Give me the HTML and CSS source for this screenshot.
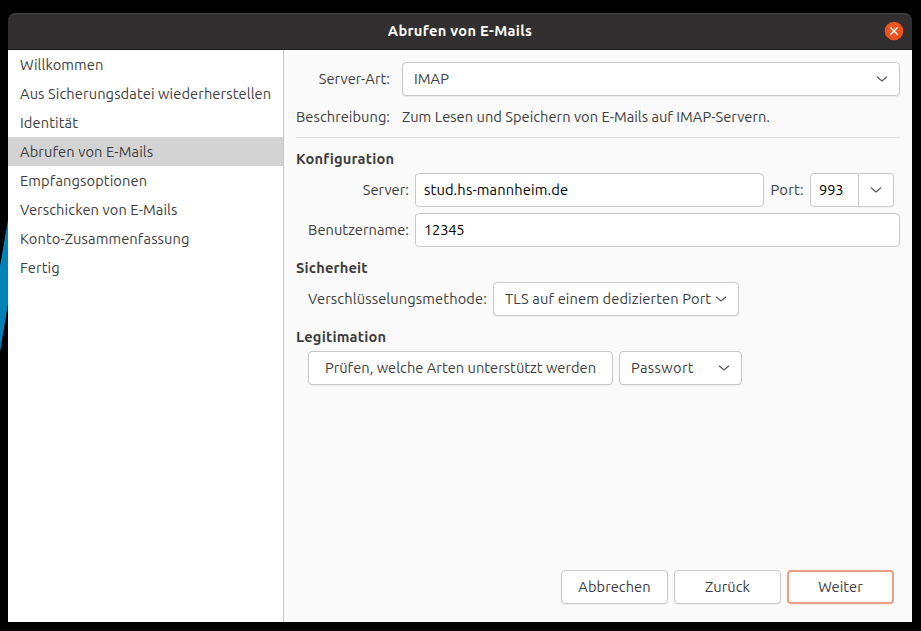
FILE: index.html
```html
<!DOCTYPE html>
<html lang="de">
<head>
<meta charset="utf-8">
<title>Abrufen von E-Mails</title>
<link rel="stylesheet" href="styles.css">
</head>
<body>
<svg class="wallpaper" width="8" height="631" viewBox="0 0 8 631"><path d="M8 220 0 266V352L8 304Z" fill="#0082b8"/></svg>
<div class="window">
  <header class="titlebar">
    <h1>Abrufen von E-Mails</h1>
    <button class="close" aria-label="Schließen"><svg width="20" height="20" viewBox="0 0 20 20"><circle cx="10" cy="10" r="9.3" fill="#e95420"/><path d="M6.5 6.5l7 7M13.5 6.5l-7 7" stroke="#fff" stroke-width="1.5"/></svg></button>
  </header>
  <div class="body">
    <nav class="steps">
      <a>Willkommen</a>
      <a>Aus Sicherungsdatei wiederherstellen</a>
      <a>Identität</a>
      <a class="active">Abrufen von E-Mails</a>
      <a>Empfangsoptionen</a>
      <a>Verschicken von E-Mails</a>
      <a>Konto-Zusammenfassung</a>
      <a>Fertig</a>
    </nav>
    <main class="page">
      <div class="type">
        <label>Server-Art:</label>
        <div class="box combo"><span>IMAP</span><svg class="chev" viewBox="0 0 12 6"><path d="M1 .7l5 4.2 5-4.2"/></svg></div>
        <label>Beschreibung:</label>
        <p>Zum Lesen und Speichern von E-Mails auf IMAP-Servern.</p>
      </div>
      <h2>Konfiguration</h2>
      <div class="config">
        <label>Server:</label>
        <div class="server">
          <div class="box entry host">stud.hs-mannheim.de</div>
          <label>Port:</label>
          <div class="port"><div class="box entry number">993</div><div class="box drop"><svg class="chev" viewBox="0 0 12 6"><path d="M1 .7l5 4.2 5-4.2"/></svg></div></div>
        </div>
        <label>Benutzername:</label>
        <div class="box entry user">12345</div>
      </div>
      <h2>Sicherheit</h2>
      <div class="line">
        <label class="method">Verschlüsselungsmethode:</label>
        <div class="box combo tls"><span>TLS auf einem dedizierten Port</span><svg class="chev" viewBox="0 0 12 6"><path d="M1 .7l5 4.2 5-4.2"/></svg></div>
      </div>
      <h2>Legitimation</h2>
      <div class="line">
        <button class="box check">Prüfen, welche Arten unterstützt werden</button>
        <div class="box combo auth"><span>Passwort</span><svg class="chev" viewBox="0 0 12 6"><path d="M1 .7l5 4.2 5-4.2"/></svg></div>
      </div>
      <footer class="actions">
        <button class="box">Abbrechen</button>
        <button class="box">Zurück</button>
        <button class="box primary">Weiter</button>
      </footer>
    </main>
  </div>
</div>
</body>
</html>
```
FILE: styles.css
```css
* { box-sizing: border-box; }
body {
  margin: 0;
  height: 631px;
  padding: 13px 9px 9px 8px;
  background: #000;
  overflow: hidden;
  color: #3d3d3d;
  font: 14.667px/20px "Ubuntu", "Noto Sans", sans-serif;
  letter-spacing: .04px;
  white-space: nowrap;
}
.wallpaper { position: absolute; left: 0; top: 0; }
.window { height: 609px; display: flex; flex-direction: column; }
.titlebar {
  height: 37px;
  display: grid;
  grid-template-columns: 28px 1fr 28px;
  align-items: center;
  background: #322f30;
  border-top: 1px solid #4a4848;
  border-bottom: 1px solid #1c1b1b;
  border-radius: 8px 8px 0 0;
  padding-bottom: 2px;
}
h1 { grid-column: 2; margin: 0; text-align: center; font-size: 14.667px; line-height: 20px; letter-spacing: .3px; color: #fff; }
.close { padding: 0; border: 0; background: none; width: 20px; height: 20px; }
.close svg { display: block; }
.body { flex: 1; display: flex; }
.steps { width: 276px; background: #fff; border-right: 1px solid #c6c6c6; letter-spacing: .1px; }
.steps a { display: block; height: 29px; line-height: 29px; padding-left: 12px; }
.steps .active { background: #d3d3d3; }
.page { flex: 1; display: flex; flex-direction: column; background: #fafafa; padding: 12px 12px 18px; }
.type {
  display: grid;
  grid-template-columns: 94px 1fr;
  grid-template-rows: 34px 41px;
  column-gap: 12px;
  align-items: center;
  height: 76px;
  border-bottom: 1px solid #dedede;
}
label { text-align: right; }
p { margin: 0; letter-spacing: .02px; }
.box {
  height: 34px;
  display: flex;
  align-items: center;
  background: #fff;
  border: 1px solid #c8c8c8;
  border-radius: 4px;
  font: inherit;
  letter-spacing: inherit;
  color: inherit;
  padding: 0 11px;
}
.combo { justify-content: space-between; }
.combo, button.box, .drop { box-shadow: 0 1px 1px rgba(0, 0, 0, .05); }
.chev { width: 12px; height: 6px; flex: none; fill: none; stroke: #555; stroke-width: 1.2; }
.entry { padding: 0 8px; color: #000; }
h2 { margin: 11px 0 4px; font-size: 14.667px; line-height: 20px; font-weight: 700; letter-spacing: .18px; }
.config {
  display: grid;
  grid-template-columns: 113px 1fr;
  gap: 6px;
  align-items: center;
}
.server { display: flex; align-items: center; }
.host { width: 349px; letter-spacing: .14px; }
.server label { width: 40px; letter-spacing: .3px; }
.port { display: flex; margin-left: 6px; }
.number { width: 49px; border-radius: 4px 0 0 4px; letter-spacing: -.1px; }
.user { letter-spacing: -.2px; }
.drop { width: 35px; padding: 0; justify-content: center; border-left: 0; border-radius: 0 4px 4px 0; }
.line { display: flex; align-items: center; gap: 6px; padding-left: 12px; }
.method { width: 179px; letter-spacing: .12px; }
.tls { width: 246px; letter-spacing: .12px; }
.check { width: 305px; justify-content: center; letter-spacing: .02px; }
.auth { width: 123px; letter-spacing: .35px; }
.actions { margin-top: auto; padding-right: 6px; display: flex; justify-content: flex-end; gap: 6px; }
.actions .box { width: 107px; justify-content: center; padding: 0; }
.actions .primary { border: 2px solid #eb9e82; }
```
